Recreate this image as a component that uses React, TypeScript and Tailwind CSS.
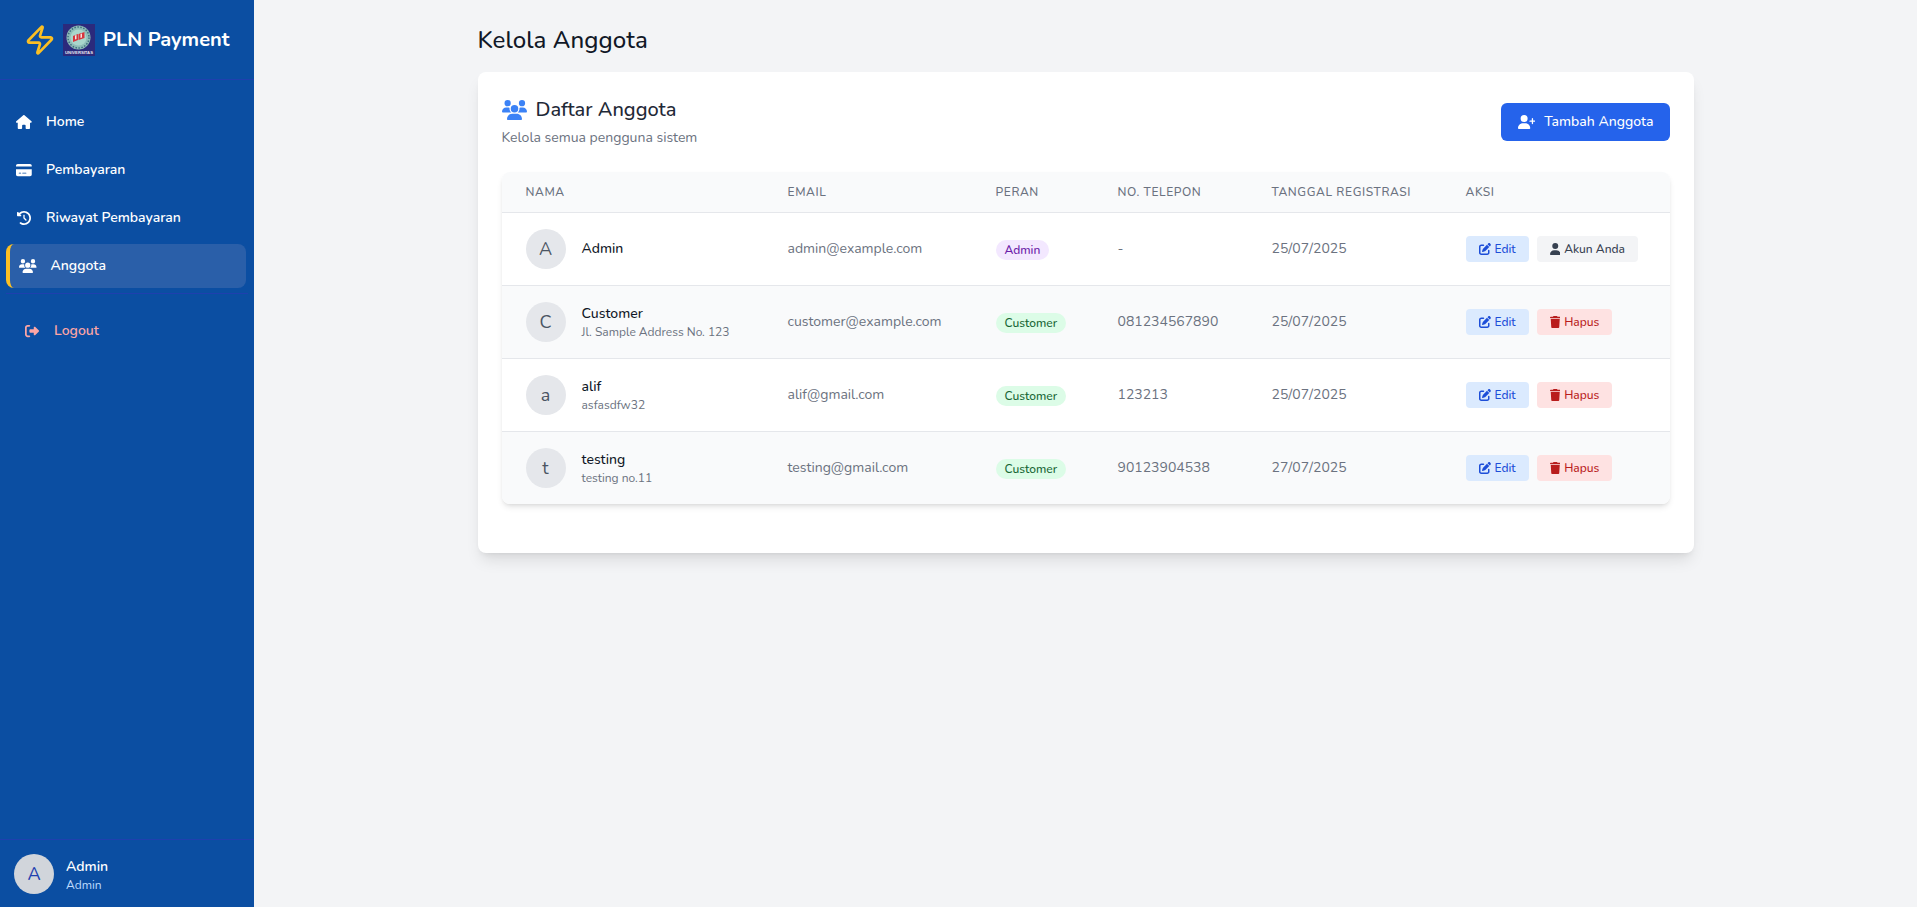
import { Zap } from 'lucide-react'
import {
  FaHouse,
  FaCreditCard,
  FaClockRotateLeft,
  FaUsers,
  FaRightFromBracket,
  FaUserPlus,
  FaPenToSquare,
  FaUser,
  FaTrash,
} from 'react-icons/fa6'

interface Member {
  name: string
  address: string | null
  email: string
  role: string
  phone: string
  date: string
  self?: boolean
}

const MEMBERS: Member[] = [
  { name: 'Admin', address: null, email: 'admin@example.com', role: 'Admin', phone: '-', date: '25/07/2025', self: true },
  { name: 'Customer', address: 'Jl. Sample Address No. 123', email: 'customer@example.com', role: 'Customer', phone: '081234567890', date: '25/07/2025' },
  { name: 'alif', address: 'asfasdfw32', email: 'alif@gmail.com', role: 'Customer', phone: '123213', date: '25/07/2025' },
  { name: 'testing', address: 'testing no.11', email: 'testing@gmail.com', role: 'Customer', phone: '90123904538', date: '27/07/2025' },
]

function Logo() {
  return (
    <svg width="32" height="32" viewBox="0 0 32 32" className="ml-[7px] shrink-0">
      <rect width="32" height="32" fill="#2b2a7c" />
      <circle cx="15.5" cy="13.5" r="12" fill="#8fbdb8" />
      <circle cx="15.5" cy="13.5" r="10.5" fill="none" stroke="#3f6f80" strokeWidth="1.5" strokeDasharray="1.5 1.5" />
      <circle cx="15.5" cy="13.5" r="8" fill="#a9d6cc" />
      <path d="M10 12l5-2v6l-5 2zM15.5 10l6-2v6l-6 2z" fill="#d8343c" />
      <path d="M12 11.5l1.5-.5v4l-1.5.5zM17.5 10l1.5-.5v4l-1.5.5z" fill="#f4e4e4" />
      <text x="16" y="30" textAnchor="middle" fontSize="4.2" fontWeight="700" fill="#e6e6f0" fontFamily="'Liberation Sans', sans-serif">
        UNIVERSITAS
      </text>
    </svg>
  )
}

function NavItem({ icon, label }: { icon: React.ReactNode; label: string }) {
  return (
    <a className="mb-1 flex h-11 items-center pl-4 text-sm font-semibold text-white">
      <span className="flex w-4 justify-center">{icon}</span>
      <span className="ml-[14px]">{label}</span>
    </a>
  )
}

function Sidebar() {
  return (
    <aside className="flex h-[907px] w-[254px] shrink-0 flex-col bg-[#0b4ea2] text-white">
      <div className="flex h-20 items-center border-b border-[#1e40af] pl-6 pr-4">
        <Zap size={32} className="shrink-0 text-[#fbbf24]" />
        <Logo />
        <span className="ml-2 text-xl font-bold whitespace-nowrap">PLN Payment</span>
      </div>
      <nav className="pt-5">
        <NavItem icon={<FaHouse className="h-3.5 w-[15.75px]" />} label="Home" />
        <NavItem icon={<FaCreditCard className="h-3.5 w-[15.75px]" />} label="Pembayaran" />
        <NavItem icon={<FaClockRotateLeft className="h-3.5 w-3.5" />} label="Riwayat Pembayaran" />
        <a className="mx-[6px] flex h-11 w-[240px] items-center rounded-lg border-l-4 border-[#fbbf24] bg-[#2a5fa9] pl-[9px] text-sm font-semibold text-white">
          <FaUsers className="h-3.5 w-[17.5px]" />
          <span className="ml-[14px]">Anggota</span>
        </a>
        <div className="mx-[6px] mt-[5px] border-t border-[#1e40af]" />
        <a className="mt-[15px] flex h-11 items-center pl-[25px] text-sm font-semibold text-[#fca5a5]">
          <FaRightFromBracket className="h-3.5 w-3.5" />
          <span className="ml-[15px]">Logout</span>
        </a>
      </nav>
      <div className="mt-auto flex h-[68px] items-center border-t border-[#1e40af] pl-[14px]">
        <div className="flex h-10 w-10 items-center justify-center rounded-full bg-[#d1d5db] text-lg font-medium text-[#1e40af]">
          A
        </div>
        <div className="ml-3 pt-[2px]">
          <p className="text-sm leading-5 font-semibold text-white">Admin</p>
          <p className="text-xs leading-4 text-[#bfdbfe]">Admin</p>
        </div>
      </div>
    </aside>
  )
}

function ActionButton({ icon, label, tone }: { icon: React.ReactNode; label: string; tone: string }) {
  return (
    <button className={`flex h-[26px] items-center gap-1 rounded px-[13px] text-xs font-medium ${tone}`}>
      {icon}
      {label}
    </button>
  )
}

function MemberRow({ member, index }: { member: Member; index: number }) {
  return (
    <tr className={`border-t border-[#e5e7eb] ${index % 2 === 1 ? 'bg-[#f9fafb]' : 'bg-white'}`}>
      <td className="py-4 pl-6">
        <div className="flex items-center">
          <div className="flex h-10 w-10 items-center justify-center rounded-full bg-[#e5e7eb] text-lg text-[#4b5563]">
            {member.name[0]}
          </div>
          <div className="ml-4">
            <p className="text-sm leading-5 font-medium text-[#111827]">{member.name}</p>
            {member.address && <p className="text-xs leading-4 text-[#6b7280]">{member.address}</p>}
          </div>
        </div>
      </td>
      <td className="pl-6 text-sm text-[#6b7280]">{member.email}</td>
      <td className="pl-6">
        <span
          className={`inline-block rounded-full px-[9px] text-xs leading-5 font-medium ${
            member.role === 'Admin' ? 'bg-[#f3e8ff] text-[#6b21a8]' : 'bg-[#dcfce7] text-[#166534]'
          }`}
        >
          {member.role}
        </span>
      </td>
      <td className="pl-6 text-sm text-[#6b7280]">{member.phone}</td>
      <td className="pl-6 text-sm text-[#6b7280]">{member.date}</td>
      <td className="pl-6">
        <div className="flex gap-2">
          <ActionButton icon={<FaPenToSquare className="h-3 w-3" />} label="Edit" tone="bg-[#dbeafe] text-[#1d4ed8]" />
          {member.self ? (
            <ActionButton icon={<FaUser className="h-3 w-[10.5px]" />} label="Akun Anda" tone="bg-[#f3f4f6] text-[#374151]" />
          ) : (
            <ActionButton icon={<FaTrash className="h-3 w-[10.5px]" />} label="Hapus" tone="bg-[#fee2e2] text-[#b91c1c]" />
          )}
        </div>
      </td>
    </tr>
  )
}

const COLUMNS = [
  { label: 'Nama', width: 'w-[262px]' },
  { label: 'Email', width: 'w-[208px]' },
  { label: 'Peran', width: 'w-[122px]' },
  { label: 'No. Telepon', width: 'w-[154px]' },
  { label: 'Tanggal Registrasi', width: 'w-[194px]' },
  { label: 'Aksi', width: 'w-[228px]' },
]

export default function App() {
  return (
    <div className="flex min-h-[907px] bg-[#f3f4f6] font-['Nunito','Lato','Noto_Sans',sans-serif]">
      <Sidebar />
      <main className="flex-1 pt-6">
        <div className="mx-auto max-w-7xl px-8">
          <h1 className="mb-4 text-2xl font-medium tracking-[0.1px] text-[#111827]">Kelola Anggota</h1>
          <section className="rounded-lg bg-white p-6 pb-[49px] shadow-lg">
            <div className="mb-6 flex items-center justify-between">
              <div>
                <h2 className="flex items-center text-xl font-medium text-[#1f2937]">
                  <FaUsers className="mr-[9px] h-5 w-[25px] text-[#3b82f6]" />
                  Daftar Anggota
                </h2>
                <p className="mt-1 text-sm text-[#6b7280]">Kelola semua pengguna sistem</p>
              </div>
              <button className="flex h-[38px] items-center gap-[9px] rounded-md bg-[#2563eb] pl-[17px] pr-4 text-sm font-medium text-white">
                <FaUserPlus className="h-3.5 w-[17.5px]" />
                Tambah Anggota
              </button>
            </div>
            <div className="overflow-hidden rounded-lg shadow-md">
              <table className="w-full table-fixed">
                <thead className="bg-[#f9fafb]">
                  <tr>
                    {COLUMNS.map((col) => (
                      <th
                        key={col.label}
                        className={`${col.width} h-10 pl-6 text-left text-xs font-medium tracking-wider text-[#6b7280] uppercase`}
                      >
                        {col.label}
                      </th>
                    ))}
                  </tr>
                </thead>
                <tbody>
                  {MEMBERS.map((member, i) => (
                    <MemberRow key={member.email} member={member} index={i} />
                  ))}
                </tbody>
              </table>
            </div>
          </section>
        </div>
      </main>
    </div>
  )
}
